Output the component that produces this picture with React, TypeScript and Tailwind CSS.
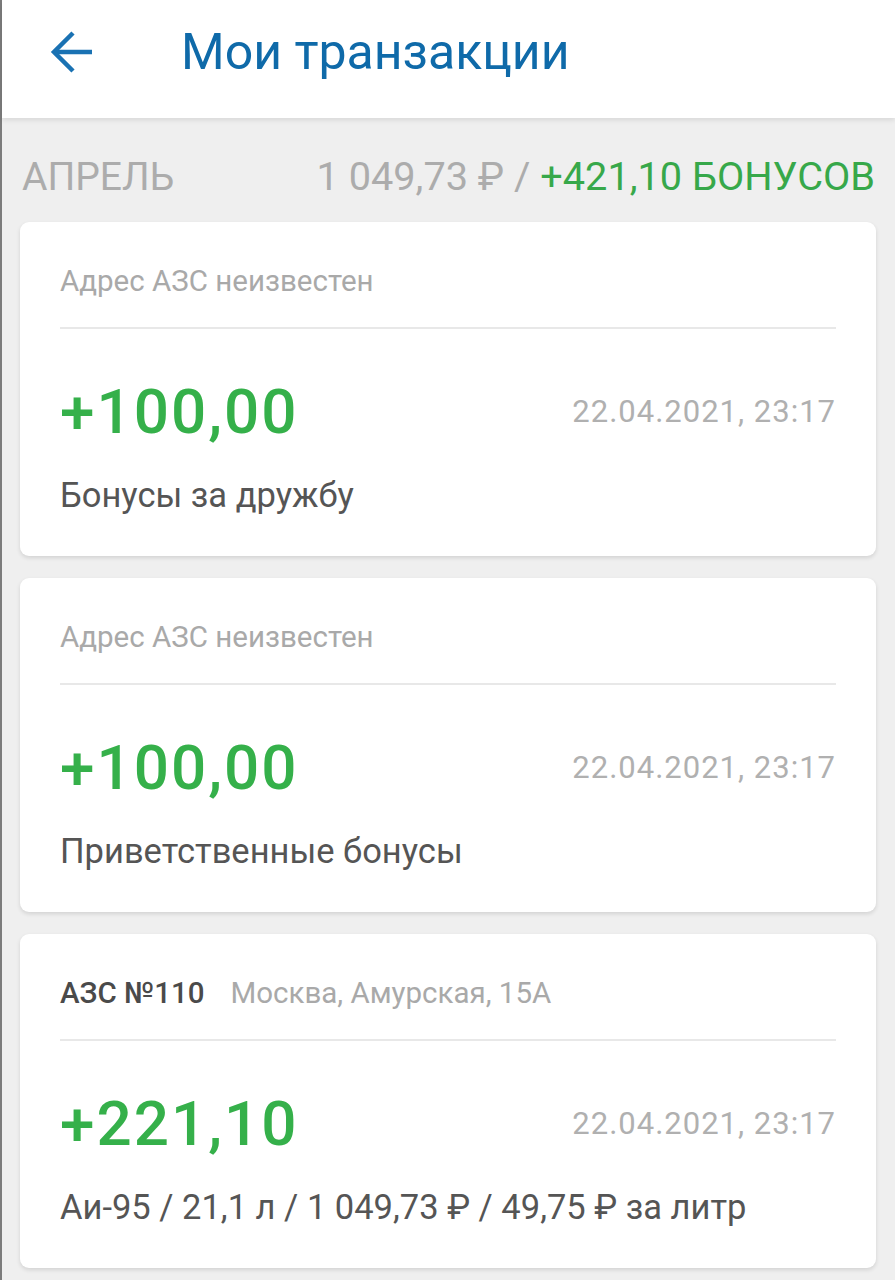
import React from 'react'

const GREEN = 'text-[#35b04a]'

type Tx = {
  station?: string
  address: string
  amount: string
  date: string
  note: string
}

const TXS: Tx[] = [
  { address: 'Адрес АЗС неизвестен', amount: '+100,00', date: '22.04.2021, 23:17', note: 'Бонусы за дружбу' },
  { address: 'Адрес АЗС неизвестен', amount: '+100,00', date: '22.04.2021, 23:17', note: 'Приветственные бонусы' },
  {
    station: 'АЗС №110',
    address: 'Москва, Амурская, 15А',
    amount: '+221,10',
    date: '22.04.2021, 23:17',
    note: 'Аи-95 / 21,1 л / 1 049,73 ₽ / 49,75 ₽ за литр',
  },
]

function BackArrow() {
  return (
    <svg width="46" height="44" viewBox="0 0 46 44" fill="none" stroke="#1a72b3" strokeWidth="4.5" strokeLinecap="butt">
      <path d="M6 22H44" />
      <path d="M25 3L6 22L25 41" />
    </svg>
  )
}

function Card({ tx }: { tx: Tx }) {
  return (
    <div className="bg-white rounded-[9px] shadow-[0_2px_4px_rgba(0,0,0,0.12)] px-10 pt-[44px] pb-[43px]">
      <div className="flex items-baseline gap-[26px] leading-[30px] text-[29.5px]">
        {tx.station && <span className="font-medium text-[#4a4a4a]">{tx.station}</span>}
        <span className="text-[#a9a9a9]">{tx.address}</span>
      </div>
      <div className="mt-[31px] h-[2px] bg-[#e8e8e8]" />
      <div className="mt-[47px] flex items-center justify-between leading-[72px]">
        <span className={`text-[62px] font-medium tracking-[2px] ${GREEN}`}>{tx.amount}</span>
        <span className="text-[31px] tracking-[1px] text-[#b0b0b0]">{tx.date}</span>
      </div>
      <div className="mt-[29px] text-[34.5px] leading-[36px] text-[#555555]">{tx.note}</div>
    </div>
  )
}

export default function App() {
  return (
    <div className="min-h-[1280px] bg-[#efefef] border-l-2 border-[#7c7c7c] font-['Roboto','Noto_Sans',sans-serif]">
      <header className="h-[118px] bg-white shadow-[0_2px_5px_rgba(0,0,0,0.1)] flex items-start pt-[26px]">
        <div className="ml-[46px] mt-[4px]">
          <BackArrow />
        </div>
        <h1 className="ml-[87px] text-[50px] leading-[52px] text-[#0f6aa9]">Мои транзакции</h1>
      </header>

      <div className="flex items-center justify-between pl-5 pr-[20px] pt-[38px] pb-[24px] text-[39px] leading-[42px]">
        <span className="text-[#acacac]">АПРЕЛЬ</span>
        <span className="text-[39.7px]">
          <span className="text-[#acacac]">1 049,73 ₽ / </span>
          <span className="text-[#37a84a]">+421,10 БОНУСОВ</span>
        </span>
      </div>

      <div className="flex flex-col gap-[22px] pl-[18px] pr-[19px]">
        {TXS.map((tx, i) => (
          <Card key={i} tx={tx} />
        ))}
      </div>
    </div>
  )
}
